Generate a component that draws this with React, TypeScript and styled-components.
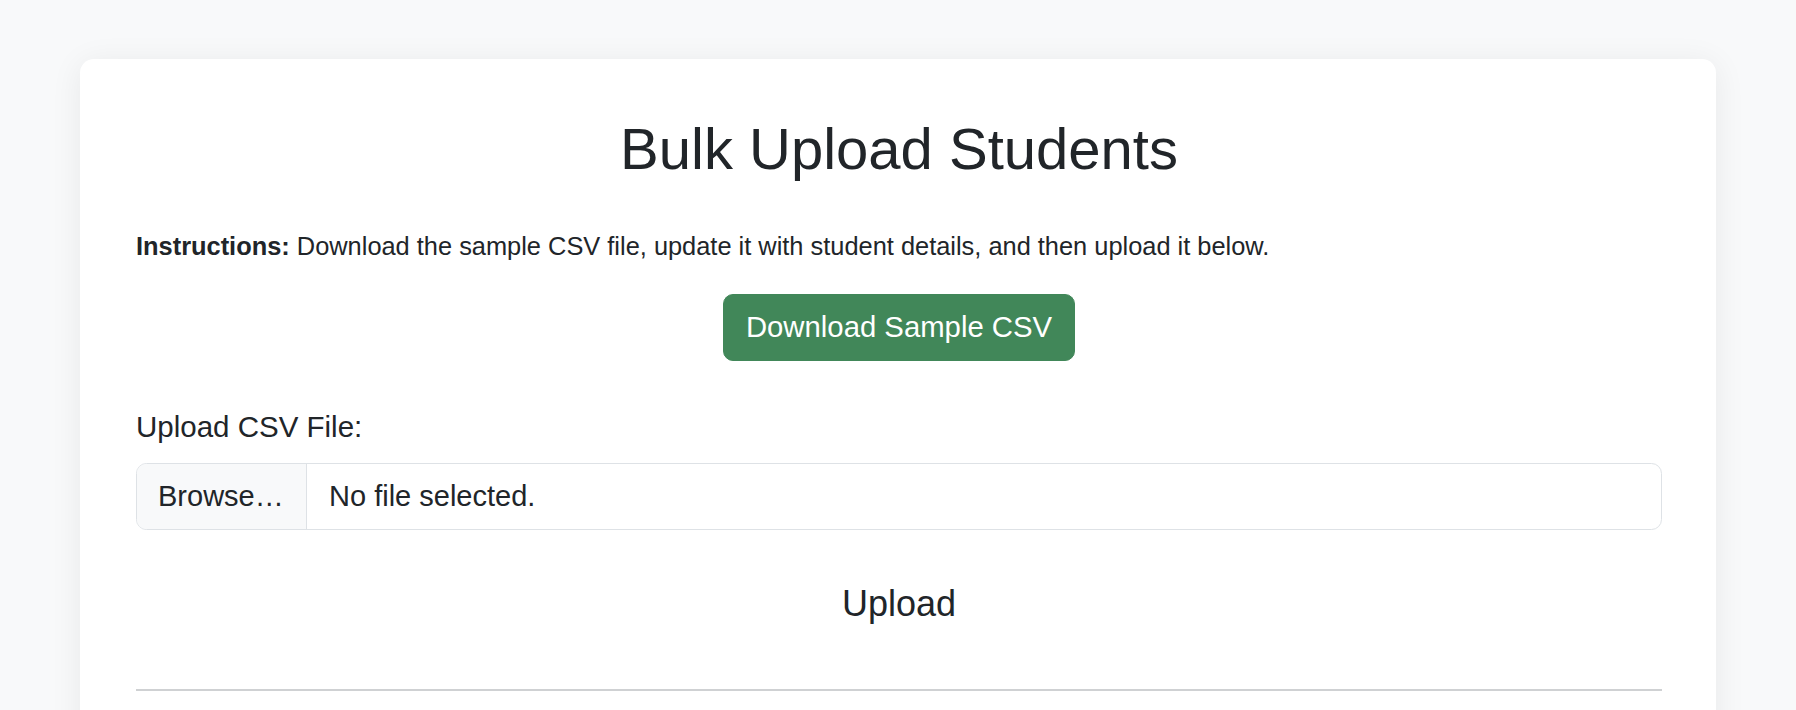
import styled, { createGlobalStyle } from 'styled-components'

const GlobalStyle = createGlobalStyle`
  html, body {
    margin: 0;
    padding: 0;
    background: #f8f9fa;
    color: #212529;
    font-family: 'Liberation Sans', Arial, Helvetica, sans-serif;
  }
  * {
    box-sizing: border-box;
  }
`

const Page = styled.main`
  padding: 59px 80px 0;
  height: 710px;
  overflow: hidden;
`

const Card = styled.section`
  background: #fff;
  border-radius: 14px;
  box-shadow: 0 4px 32px rgba(0, 0, 0, 0.07);
  padding: 55px 54px 80px 56px;
`

const Title = styled.h2`
  margin: 0 0 43px;
  font-size: 58px;
  font-weight: 400;
  line-height: 1.2;
  text-align: center;
`

const Instructions = styled.p`
  margin: 0 0 29px;
  font-size: 25.4px;
  line-height: 1.5;

  strong {
    font-weight: 700;
  }
`

const Center = styled.div`
  display: flex;
  justify-content: center;
`

const DownloadButton = styled.button`
  height: 67px;
  padding: 0 22px;
  font-family: inherit;
  font-size: 29.3px;
  color: #fff;
  background: #418759;
  border: 1.75px solid #418759;
  border-radius: 10px;
  cursor: pointer;
`

const Field = styled.div`
  margin-top: 45px;
`

const Label = styled.label`
  display: block;
  margin-bottom: 15px;
  font-size: 29.5px;
  line-height: 1.42;
`

const FileInput = styled.div`
  display: flex;
  height: 67px;
  border: 1.75px solid #dee2e6;
  border-radius: 10.5px;
  overflow: hidden;
  font-size: 29px;
`

const BrowseButton = styled.span`
  display: flex;
  align-items: center;
  width: 170px;
  padding: 0 21px;
  background: #f8f9fa;
  border-right: 1.75px solid #dee2e6;
`

const FileName = styled.span`
  display: flex;
  align-items: center;
  padding: 0 22px;
`

const UploadButton = styled.button`
  margin-top: 32px;
  padding: 14px 28px;
  font-family: inherit;
  font-size: 36px;
  line-height: 1.5;
  color: #212529;
  background: transparent;
  border: 1.75px solid transparent;
  cursor: pointer;
`

const Divider = styled.hr`
  margin: 43px 0 0;
  border: 0;
  border-top: 2px solid #cfd1d3;
`

export default function App() {
  return (
    <>
      <GlobalStyle />
      <Page>
        <Card>
          <Title>Bulk Upload Students</Title>
          <Instructions>
            <strong>Instructions:</strong> Download the sample CSV file, update
            it with student details, and then upload it below.
          </Instructions>
          <Center>
            <DownloadButton type="button">Download Sample CSV</DownloadButton>
          </Center>
          <Field>
            <Label>Upload CSV File:</Label>
            <FileInput>
              <BrowseButton>Browse…</BrowseButton>
              <FileName>No file selected.</FileName>
            </FileInput>
          </Field>
          <Center>
            <UploadButton type="button">Upload</UploadButton>
          </Center>
          <Divider />
        </Card>
      </Page>
    </>
  )
}
